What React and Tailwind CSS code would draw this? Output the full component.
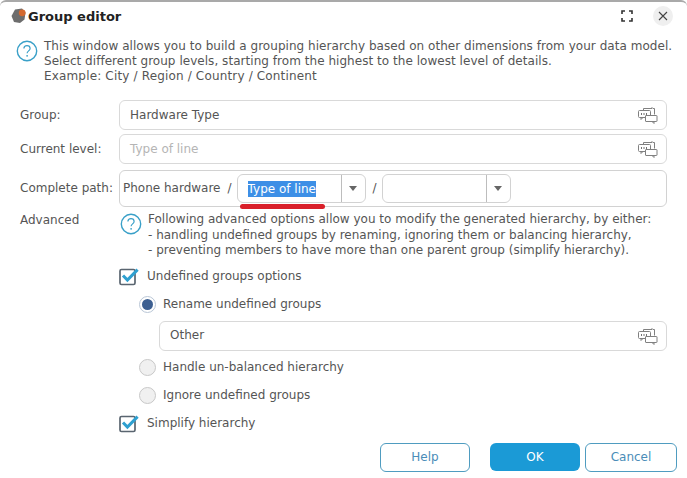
import React from "react";

const font = { fontFamily: '"DejaVu Sans", sans-serif' };

// round question mark used in the help notes
const HelpIcon = () => (
  <svg width="22" height="22" viewBox="0 0 22 22" fill="none" className="shrink-0">
    <circle cx="11" cy="11" r="9.7" stroke="#3aa0c8" strokeWidth="1.4" />
    <path d="M7.9 8.6c0-1.9 1.4-3 3.1-3s3.1 1.1 3.1 2.8c0 2.4-3 2.5-3 4.9" stroke="#3aa0c8" strokeWidth="1.2" />
    <circle cx="11.1" cy="15.8" r="0.9" fill="#3aa0c8" />
  </svg>
);

// two overlapping speech bubbles at the end of the inputs
const BubbleIcon = () => (
  <svg width="20" height="20" viewBox="0 0 20 20" fill="none" stroke="#808080" strokeWidth="1" className="shrink-0">
    <path d="M5.5 5.5V3.5h8.5v-1l1 1h1.5v6" />
    <rect x="0.5" y="5.5" width="12" height="7" rx="1" fill="#fff" />
    <path d="M3 12.5v2l2-2" />
    <rect x="7.5" y="10.5" width="11.5" height="6" rx="0.5" fill="#fff" />
    <path d="M16 16.5v2l-2-2" />
    <path d="M3 9h1M5.5 9h1M8 9h1" strokeWidth="1.4" stroke="#444" />
  </svg>
);

const CheckBox = () => (
  <svg width="20" height="18" viewBox="0 0 20 18" fill="none" className="shrink-0">
    <rect x="1" y="1.5" width="15" height="15" rx="1.5" stroke="#5a6570" strokeWidth="1.7" fill="#fff" />
    <path d="M4 7.5l4.4 4.6L18.6 1.6" stroke="#2fa0d0" strokeWidth="3" />
  </svg>
);

const Radio = ({ checked }) => (
  <span className={`w-[17px] h-[17px] rounded-full border flex items-center justify-center shrink-0 ${checked ? "border-[#b9c6d6] bg-white" : "border-[#c8c8c8] bg-[#f0f0f0]"}`}>
    {checked && <span className="w-[11px] h-[11px] rounded-full bg-[#3c5f91]" />}
  </span>
);

const TextBox = ({ value, placeholder, className = "" }) => (
  <div className={`h-[30px] border border-[#d9d9d9] rounded-[6px] flex items-center justify-between pl-[10px] pr-[8px] bg-white ${className}`}>
    <span className={placeholder ? "text-[#b5b5b5]" : "text-[#555]"}>{value || placeholder}</span>
    <BubbleIcon />
  </div>
);

const Combo = ({ value, className = "" }) => (
  <div className={`h-[29px] border border-[#d2d2d2] rounded-[6px] flex items-stretch bg-white ${className}`}>
    <div className="flex-1 flex items-center pl-[10px]">
      {value && <span className="bg-[#3d8fe6] text-white leading-[16px]">{value}</span>}
    </div>
    <div className="w-[24px] border-l border-[#bdbdbd] flex items-center justify-center">
      <span className="w-0 h-0 border-x-[4px] border-x-transparent border-t-[5px] border-t-[#666]" />
    </div>
  </div>
);

const Row = ({ label, children, className = "" }) => (
  <div className={`flex items-center ${className}`}>
    <span className="w-[99px] shrink-0 text-[#555]">{label}</span>
    <div className="flex-1 min-w-0">{children}</div>
  </div>
);

const Option = ({ checked, children, className = "" }) => (
  <div className={`flex items-center gap-[7px] ${className}`}>
    <Radio checked={checked} />
    <span>{children}</span>
  </div>
);

export default function App() {
  return (
    <div style={font} className="relative w-[687px] h-[478px] overflow-hidden bg-white border-t-2 border-[#a9a9a9] rounded-t-[6px] text-[12px] leading-[15px] text-[#555]">
      {/* Title bar */}
      <div className="h-[28px] flex items-center pl-[10px] pr-[14px]">
        <svg width="18" height="18" viewBox="0 0 18 18" className="shrink-0">
          <path d="M5 2.5L12 1.5l3.5 4-1 7-4.5 3.5-6-1L1.5 9z" fill="#6d6d6d" />
          <circle cx="12.2" cy="5.8" r="3.4" fill="#d4692f" />
        </svg>
        <span className="text-[13px] font-bold text-[#222]">Group editor</span>
        <div className="flex-1" />
        <svg width="12" height="12" viewBox="0 0 12 12" fill="none" stroke="#333" strokeWidth="1.6" className="mr-[20px]">
          <path d="M1 4V1h3M8 1h3v3M11 8v3H8M4 11H1V8" />
        </svg>
        <span className="w-[20px] h-[20px] rounded-full bg-[#efefef] flex items-center justify-center">
          <svg width="10" height="10" viewBox="0 0 10 10" stroke="#444" strokeWidth="1.1">
            <path d="M1 1l8 8M9 1l-8 8" />
          </svg>
        </span>
      </div>

      {/* Intro */}
      <div className="flex mt-[9px] pl-[16px] gap-[6px]">
        <div className="mt-[1px]"><HelpIcon /></div>
        <p className="tracking-[0.04px]">
          This window allows you to build a grouping hierarchy based on other dimensions from your data model.<br />
          Select different group levels, starting from the highest to the lowest level of details.<br />
          <span className="tracking-[0.16px]">Example: City / Region / Country / Continent</span>
        </p>
      </div>

      {/* Form */}
      <div className="pl-[20px] pr-[20px] mt-[16px]">
        <Row label="Group:"><TextBox value="Hardware Type" /></Row>
        <Row label="Current level:" className="mt-[4px]"><TextBox placeholder="Type of line" /></Row>
        <Row label="Complete path:" className="mt-[6px]">
          <div className="h-[37px] border border-[#d2d2d2] rounded-[6px] flex items-center pl-[3px]">
            <span>Phone hardware</span>
            <span className="ml-[7px]">/</span>
            <Combo value="Type of line" className="w-[129px] ml-[5px]" />
            <span className="ml-[7px] mr-[5px]">/</span>
            <Combo className="w-[129px]" />
          </div>
        </Row>

        <div className="flex mt-[5px]">
          <span className="w-[99px] shrink-0 mt-[1px]">Advanced</span>
          <div className="flex-1 min-w-0">
            <div className="flex gap-[6px] pl-[1px]">
              <div className="mt-[1px]"><HelpIcon /></div>
              <p className="leading-[15.5px]">
                Following advanced options allow you to modify the generated hierarchy, by either:<br />
                - handling undefined groups by renaming, ignoring them or balancing hierarchy,<br />
                - preventing members to have more than one parent group (simplify hierarchy).
              </p>
            </div>
            <div className="flex items-center gap-[8px] mt-[9px]">
              <CheckBox />
              <span>Undefined groups options</span>
            </div>
            <Option checked className="ml-[20px] mt-[10px]">Rename undefined groups</Option>
            <TextBox value="Other" className="ml-[40px] mt-[8px]" />
            <Option className="ml-[20px] mt-[8px]">Handle un-balanced hierarchy</Option>
            <Option className="ml-[20px] mt-[11px]">Ignore undefined groups</Option>
            <div className="flex items-center gap-[8px] mt-[11px]">
              <CheckBox />
              <span>Simplify hierarchy</span>
            </div>
          </div>
        </div>
      </div>

      {/* Footer buttons */}
      <div className="flex items-center justify-end pr-[10px] mt-[10px]">
        <button className="w-[90px] h-[29px] border border-[#4f9cc0] rounded-[6px] text-[#4a8db8] bg-white">Help</button>
        <button className="w-[90px] h-[28px] ml-[20px] rounded-[6px] bg-[#1b9ad6] text-white">OK</button>
        <button className="w-[92px] h-[29px] ml-[5px] border border-[#4f9cc0] rounded-[6px] text-[#4a8db8] bg-white">Cancel</button>
      </div>

      {/* Red annotation under the selected level */}
      <div className="absolute left-[240px] top-[202px] w-[85px] h-[5px] rounded-full bg-[#d9202a]" />
    </div>
  );
}
